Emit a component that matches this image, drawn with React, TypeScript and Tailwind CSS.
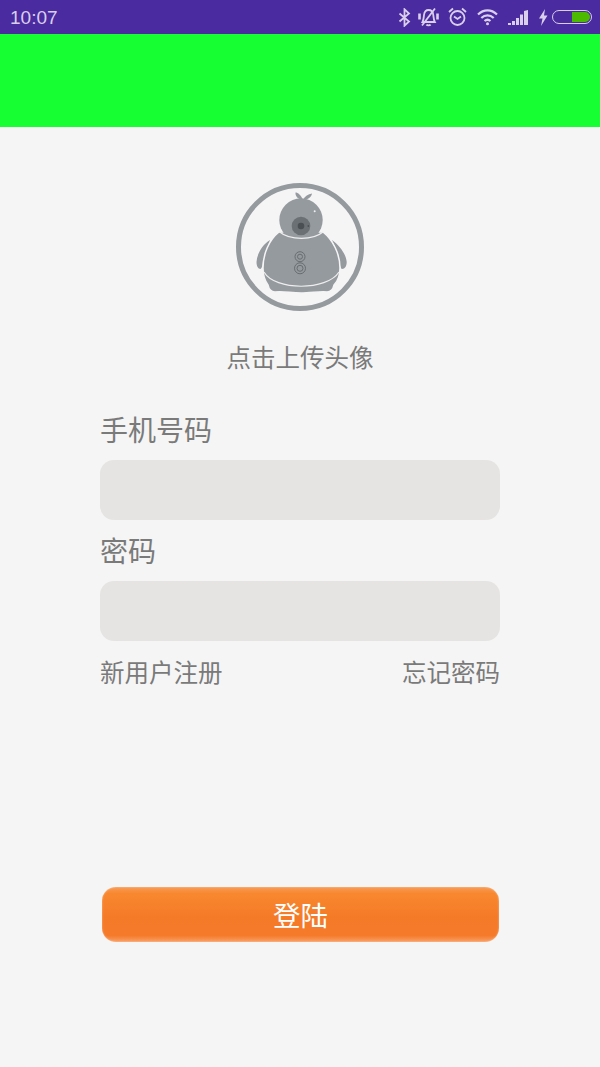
const FONT = '[font-family:"Noto_Sans_CJK_SC","Liberation_Sans",sans-serif]';

function StatusIcons() {
  return (
    <div className="flex items-center text-[#d9cfec]">
      <svg width="13" height="19" viewBox="0 0 13 19" fill="none" stroke="currentColor" strokeWidth="1.8" className="mr-[7px]">
        <path d="M1.500 5.500l9.500 8-4.500 4.200V1.300L11 5.500l-9.500 8" />
      </svg>
      <svg width="21" height="20" viewBox="0 0 21 20" fill="none" stroke="currentColor" strokeWidth="1.8" className="mr-[9px]">
        <path d="M4.500 15c1.200-2 1.200-4.500 1.500-7C6.400 5 8 3 10.500 3S15 5 15.300 8c.3 2.500.3 5 1.500 7z" />
        <path d="M8.500 17.500c.6 1.300 3.400 1.300 4 0" />
        <path d="M4 18.500L17 1.500" />
        <path d="M1.500 6.500v6M19.500 6.500v6" strokeWidth="2.600" />
      </svg>
      <svg width="19" height="20" viewBox="0 0 19 20" fill="none" stroke="currentColor" strokeWidth="1.800" className="mr-[10px]">
        <circle cx="9.500" cy="11" r="7" />
        <path d="M6 9.500L9.500 12 13 9.500" />
        <path d="M1 5l4-3.500M18 5l-4-3.500" />
      </svg>
      <svg width="21" height="18" viewBox="0 0 21 18" fill="none" stroke="currentColor" strokeWidth="2.200" className="mr-[10px]">
        <path d="M1 6.500c5.700-5.500 13.300-5.500 19 0" />
        <path d="M4.300 10c3.700-3.500 8.700-3.500 12.400 0" />
        <path d="M7.500 13c1.800-1.500 4.200-1.500 6 0" />
        <circle cx="10.500" cy="15.800" r="1.500" fill="currentColor" stroke="none" />
      </svg>
      <svg width="21" height="15" viewBox="0 0 21 15" fill="currentColor" className="mr-[9px]">
        <path d="M0 15v-2h3v2zM4 15v-4h3v4zM8 15V8h3v7zM12 15V4.500h3V15zM16 15V1l4-1v15z" />
      </svg>
      <svg width="10" height="17" viewBox="0 0 10 17" fill="currentColor" className="mr-[4px]">
        <path d="M7 0L1 9.500h3.500L3 17l6.500-10.500H6z" />
      </svg>
      <div className="flex h-[14px] w-[40px] justify-end rounded-[7px] border border-[#d9cfec] p-[1px]">
        <div className="w-[18px] rounded-r-[5px] bg-[#4cbb00]" />
      </div>
    </div>
  );
}

function Avatar() {
  return (
    <svg width="130" height="130" viewBox="0 0 130 130" className="block">
      <circle cx="65" cy="65" r="61.500" fill="none" stroke="#959a9e" strokeWidth="5" />
      {/* sprout */}
      <path d="M68 18C66 13 63 10.500 60.500 10.500 60 14 63 17.500 68 18Z" fill="#959a9e" />
      <path d="M68 18C70 14 73 12 77 11.500 76.500 15 73 18 68 18Z" fill="#959a9e" />
      {/* arms */}
      <path d="M35 58C27 63 22 72 21.500 80 21.500 84 23 87 25.500 87 27 86 27.500 83 28 79Z" fill="#959a9e" />
      <path d="M97 58C105 64 111 72 111.700 80 111.700 84 110 87 107 87 105 86 104.500 80 103 72Z" fill="#959a9e" />
      {/* body */}
      <path
        d="M44 50C34 58 28 72 28 86 28 94 30 99 33 103 34 108 36 110 40 110 48 109 56 111 66 111 76 111 86 109 92 110 96 110 98 108 99 103 103 99 105 94 105 86 105 72 98 58 88 50Z"
        fill="#959a9e"
        stroke="#f5f5f5"
        strokeWidth="1.500"
      />
      <path d="M29 90C40 109 92 109 104 90" fill="none" stroke="#eeeeee" strokeWidth="1.200" />
      <circle cx="66" cy="38" r="21.700" fill="#959a9e" />
      <path d="M44.300 49.700C55 58.500 78 58.500 88.300 49.700" fill="none" stroke="#eeeeee" strokeWidth="1.200" />
      <circle cx="66" cy="44" r="9.300" fill="#6b7075" />
      <circle cx="66" cy="44" r="3.300" fill="#4a4f54" />
      <circle cx="73.300" cy="44" r="0.800" fill="#3d4247" />
      <circle cx="79.700" cy="29.300" r="1" fill="#eeeeee" />
      <g fill="none" stroke="#686d72" strokeWidth="1">
        <circle cx="65" cy="74.700" r="5" />
        <circle cx="65" cy="74.700" r="2.500" />
        <circle cx="65" cy="86.300" r="5.500" />
        <circle cx="65" cy="86.300" r="3" />
      </g>
    </svg>
  );
}

export default function App() {
  return (
    <div className={`flex min-h-[1067px] w-[600px] flex-col bg-[#f5f5f5] ${FONT}`}>
      <div className="flex h-[34px] items-center justify-between bg-[#4b2ba0] pl-[10px] pr-[8px]">
        <span className="text-[19px] leading-none text-[#d9cfec] [font-family:'Liberation_Sans',sans-serif]">10:07</span>
        <StatusIcons />
      </div>
      <div className="h-[93px] bg-[#16ff33]" />

      <div className="mt-[55px] flex justify-center">
        <Avatar />
      </div>
      <p className="mt-[27px] text-center text-[24.500px] leading-[36px] text-[#7a7a7a]">点击上传头像</p>

      <div className="mt-[37px] flex flex-col px-[100px]">
        <label className="h-[48px] text-[28px] leading-[34px] text-[#7a7a7a]">手机号码</label>
        <div className="h-[60px] rounded-[14px] bg-[#e5e4e2]" />
        <label className="mt-[12px] h-[49px] text-[28px] leading-[36px] text-[#7a7a7a]">密码</label>
        <div className="h-[60px] rounded-[14px] bg-[#e5e4e2]" />
        <div className="mt-[13px] flex items-center justify-between text-[24.500px] leading-[36px] text-[#7a7a7a]">
          <span>新用户注册</span>
          <span>忘记密码</span>
        </div>
      </div>

      <div className="ml-[102px] mt-[197px] flex h-[55px] w-[397px] items-center justify-center rounded-[14px] bg-[linear-gradient(to_bottom,#f89a55_0%,#f8882f_12%,#f57a28_55%,#f57a2a_88%,#f8a066_100%)] text-[27.500px] text-white shadow-[inset_0_0_2px_rgba(255,255,255,0.5)]">
        登陆
      </div>
    </div>
  );
}
